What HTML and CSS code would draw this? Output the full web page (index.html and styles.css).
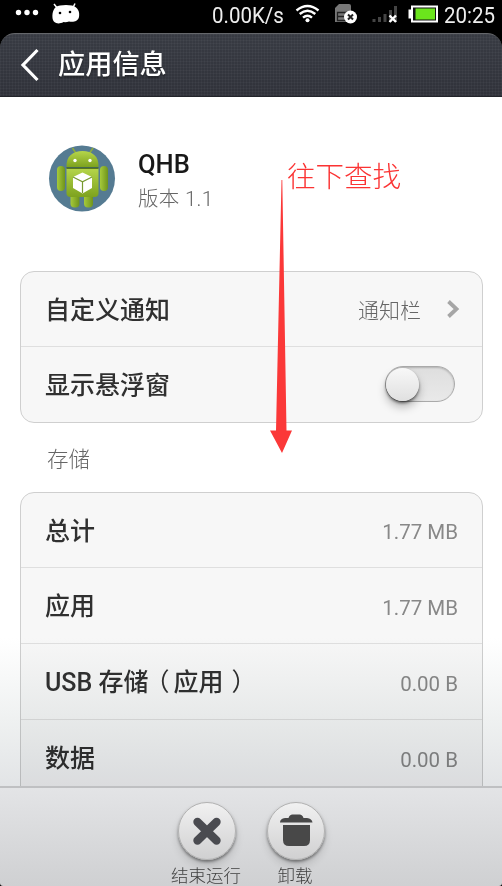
FILE: index.html
```html
<!DOCTYPE html>
<html lang="zh-CN">
<head>
<meta charset="utf-8">
<title>应用信息</title>
<link rel="stylesheet" href="styles.css">
</head>
<body>
<div class="screen">
  <div class="status">
    <svg class="status-left" width="90" height="30" viewBox="0 0 90 30" fill="#fff">
      <circle cx="18.500" cy="12.500" r="2.700"/><circle cx="27" cy="12.500" r="2.700"/><circle cx="35.500" cy="12.500" r="2.700"/>
      <path d="M54 4l4 5M75 3.500l-2.500 5" stroke="#fff" stroke-width="1.500"/>
      <path d="M52.500 18C52 12 54 6 60 5.500Q66 4.500 72 5.500C78 7 80 12 79 17C78 21.500 73 22.500 69 21.500Q66 22.500 63.500 22C58 25 53 23 52.500 18Z"/>
      <circle cx="60" cy="13" r="1.300" fill="#000"/><circle cx="70" cy="12" r="1.300" fill="#000"/>
    </svg>
    <div class="status-right">
      <span class="speed">0.00K/s</span>
      <svg width="159" height="30" viewBox="284 0 159 30">
        <g fill="none" stroke="#fff" stroke-width="2.400"><path d="M296.500 10.500Q307.500 1.500 318.500 10.500"/><path d="M299.700 14Q307.500 7.500 315.300 14"/><path d="M303 17.700Q307.500 13.800 312 17.700"/></g>
        <circle cx="307.500" cy="20.300" r="2" fill="#fff"/>
        <path d="M335 8l4-4h10q2 0 2 2v16h-16z" fill="#777"/>
        <path d="M337.500 12.500h9v8h-9zM337.500 16.500h9" fill="none" stroke="#222" stroke-width="1.300"/>
        <circle cx="350.500" cy="17" r="6.500" fill="#fff"/>
        <path d="M348 14.500l5 5M353 14.500l-5 5" stroke="#222" stroke-width="2"/>
        <path d="M372.500 19h3v3h-3zM378 17h3v5h-3zM383.500 14h3v8h-3zM389 10h3v12h-3zM394 6h3v16h-3z" fill="#444"/>
        <path d="M389.500 15.500l6.500 6.500M396 15.500l-6.500 6.500" stroke="#fff" stroke-width="2.400"/>
        <path d="M411 5.500h27v17h-27v-4h-2.500v-9h2.500z" fill="#fff"/>
        <path d="M413 7.500h23v13h-23z" fill="#111"/><path d="M415.500 8.500h19.500v11h-19.500z" fill="#6be51c"/>
      </svg>
      <span class="clock">20:25</span>
    </div>
  </div>
  <header class="header">
    <svg class="back" width="20" height="34" viewBox="0 0 20 34"><path d="M17.500 2L3 17l14.500 15" fill="none" stroke="#fff" stroke-width="3.200"/></svg>
    <h1>应用信息</h1>
  </header>
  <main class="content">
    <section class="profile">
      <svg class="app-icon" width="68" height="68" viewBox="0 0 68 68">
        <defs>
          <linearGradient id="body" x2="0" y2="1"><stop stop-color="#b6d64a"/><stop offset="1" stop-color="#7da21f"/></linearGradient>
          <linearGradient id="limb"><stop stop-color="#a6ca3a"/><stop offset="1" stop-color="#6f941c"/></linearGradient>
        </defs>
        <circle cx="34" cy="34.500" r="33" fill="#557b92"/>
        <path d="M24.500 4l4 6M45 4l-4 6" stroke="#8caa3c" stroke-width="1.600"/>
        <rect x="22.500" y="48" width="9" height="15.500" rx="4" fill="url(#limb)"/><rect x="36" y="48" width="9" height="15.500" rx="4" fill="url(#limb)"/>
        <rect x="9" y="22" width="8" height="25" rx="4" fill="url(#limb)"/><rect x="52" y="22" width="8" height="25" rx="4" fill="url(#limb)"/>
        <path d="M18.500 24h32v25q0 4-4 4h-24q-4 0-4-4z" fill="url(#body)"/>
        <path d="M18.500 23C18 12 25 7 34.500 7S51 12 50.500 23Z" fill="url(#body)"/>
        <path d="M18.500 24.200h32" stroke="#38560f" stroke-width="1.300"/>
        <circle cx="27" cy="16.500" r="1.700" fill="#fff"/><circle cx="42" cy="16.500" r="1.700" fill="#fff"/>
        <path d="M34.500 28.500l9.500 4.500v11l-9.500 5.500-9.500-5.500V33z" fill="#fff"/>
        <path d="M25 33l9.500 4.800L44 33M34.500 37.800V49" fill="none" stroke="#789a30" stroke-width="1.200"/>
      </svg>
      <div class="app-text"><div class="app-name">QHB</div><div class="version">版本 1.1</div></div>
    </section>
    <section class="card">
      <div class="row"><span class="label">自定义通知</span><span class="hint">通知栏</span>
        <svg class="chevron" width="14" height="20" viewBox="0 0 14 20"><path d="M2.500 2.500L10.500 10l-8 7.500" fill="none" stroke="#a6a6a6" stroke-width="3.800"/></svg></div>
      <div class="row"><span class="label">显示悬浮窗</span><span class="toggle"><span class="knob"></span></span></div>
    </section>
    <h2>存储</h2>
    <section class="card storage">
      <div class="row"><span class="label">总计</span><span class="value">1.77 MB</span></div>
      <div class="row"><span class="label">应用</span><span class="value">1.77 MB</span></div>
      <div class="row"><span class="label">USB 存储<span class="open">（</span>应用<span class="close">）</span></span><span class="value">0.00 B</span></div>
      <div class="row"><span class="label">数据</span><span class="value">0.00 B</span></div>
    </section>
  </main>
  <footer class="footer">
    <div class="action"><span class="disc"><svg width="58" height="58" viewBox="0 0 58 58"><path d="M19.500 20l19 18.500M38.500 20l-19 18.500" stroke="#4a4b50" stroke-width="8.400" stroke-linecap="round"/></svg></span><span>结束运行</span></div>
    <div class="action"><span class="disc"><svg width="58" height="58" viewBox="0 0 58 58" fill="#484848"><path d="M13 20.500q0-4 5-4.500h3.500q1-3.500 4-3.500h7q3 0 4 3.500H40q5 .5 5.500 4.500z"/><path d="M16 23h27v15q0 6-6 6H22q-6 0-6-6z"/></svg></span><span>卸载</span></div>
  </footer>
  <div class="fade"></div>
  <svg class="arrow" width="24" height="276" viewBox="0 0 24 276"><path d="M11.500 1h.8L16.500 251.500h5.500L12 274 0 251.500h6z" fill="#fb3838"/></svg>
  <div class="note">往下查找</div>
</div>
</body>
</html>
```
FILE: styles.css
```css
* { box-sizing: border-box; }
body { margin: 0; background: #000; font-family: Roboto, "Noto Sans CJK SC", sans-serif; }
.screen { position: relative; width: 502px; height: 886px; overflow: hidden; display: flex; flex-direction: column; background: #000; }
.status { height: 33px; flex: none; display: flex; justify-content: space-between; color: #eee; font-size: 22.500px; line-height: 30px; }
.status-right { display: flex; padding-right: 7px; }
.status svg { flex: none; }
.speed, .clock { white-space: nowrap; transform: scaleX(.91); transform-origin: right; }
.clock { width: 52px; display: flex; justify-content: flex-end; }
.header { height: 64px; flex: none; display: flex; align-items: center; padding-left: 20px; border-radius: 15px 15px 0 0; border-top: 1px solid #65676b; border-bottom: 1px solid #22242a; color: #fff;
  background: repeating-linear-gradient(90deg, #ffffff08 0 1px, transparent 1px 3px), repeating-linear-gradient(#ffffff08 0 1px, transparent 1px 3px), linear-gradient(#383b43, #30323a); }
.header h1 { margin: 0 0 1px 18px; font-size: 27.200px; line-height: 40px; font-weight: 500; text-shadow: 0 2px 2px #0006; }
.content { height: 689px; flex: none; overflow: hidden; background: #fff; padding: 0 19px 0 20px; }
.profile { height: 174px; display: flex; padding: 47px 0 0 28px; }
.app-icon { flex: none; }
.app-text { padding: 4px 0 0 22px; }
.app-name { font-size: 25.500px; line-height: 32px; font-weight: 500; color: #181818; }
.version { margin-top: 3px; font-size: 20.500px; line-height: 32px; font-weight: 300; color: #666; letter-spacing: .3px; }
.card { width: 463px; border: 1px solid #cfcfcf; border-radius: 14px; background: #f7f7f7; overflow: hidden; }
.row { height: 76px; display: flex; align-items: center; padding: 0 24px; border-top: 1px solid #dfdfdf; }
.row:first-child { height: 74px; border-top: 0; }
.label { flex: 1; padding-top: 3px; color: #303030; font-size: 25px; line-height: 36px; font-weight: 500; }
.open, .close { font-weight: 400; font-feature-settings: "halt"; }
.open { margin: 0 4px 0 8.500px; }
.close { margin-left: 8px; }
.hint { color: #666; font-size: 21px; font-weight: 300; }
.chevron { margin-left: 25px; margin-right: -2px; }
.value { color: #888; font-size: 20.500px; line-height: 30px; padding-top: 4px; }
.toggle { position: relative; width: 70px; height: 36px; margin: 0 3px 1px 0; border: 1px solid #aaa; border-radius: 18px; background: linear-gradient(#dedede, #e9e9e9); box-shadow: inset 0 1px 2px #0003; }
.knob { position: absolute; left: 0; top: 1px; width: 33px; height: 33px; border-radius: 50%; background: linear-gradient(#f8f8f8, #e0e0e0); box-shadow: 0 2px 3px #0008, 0 6px 10px #0004; }
h2 { margin: 0; height: 69px; padding: 20px 0 0 27px; font-size: 21.500px; line-height: 34px; font-weight: 300; color: #666; }
.storage { border-radius: 14px 14px 0 0; }
.fade { position: absolute; left: 0; top: 638px; width: 502px; height: 148px; background: linear-gradient(#fff, #eff1f1 55%, #e2e4e6); mix-blend-mode: multiply; pointer-events: none; }
.footer { height: 100px; flex: none; display: flex; gap: 17px; padding: 14px 0 0 171px; border-top: 2px solid #bfc0c2; border-radius: 0 0 3px 3px; background: linear-gradient(#e3e4e6, #cfd0d2); }
.action { width: 72px; display: flex; flex-direction: column; align-items: center; color: #404040; font-size: 17.500px; line-height: 24px; white-space: nowrap; font-weight: 300; }
.action > span:last-child { padding-right: 2px; }
.disc { width: 58px; height: 58px; margin-bottom: 4px; border: 1px solid #b2b2b2; border-radius: 50%; background: linear-gradient(#f1f1f1, #d0d0d1); box-shadow: 0 2px 3px #0006, 0 6px 8px #0002; }
.disc svg { display: block; margin: -1px; }
.arrow { position: absolute; left: 270px; top: 179px; }
.note { position: absolute; left: 287px; top: 154px; color: #fb3333; font-family: "Noto Sans CJK SC", sans-serif; font-size: 28.500px; line-height: 42px; font-weight: 300; white-space: nowrap; }
```
